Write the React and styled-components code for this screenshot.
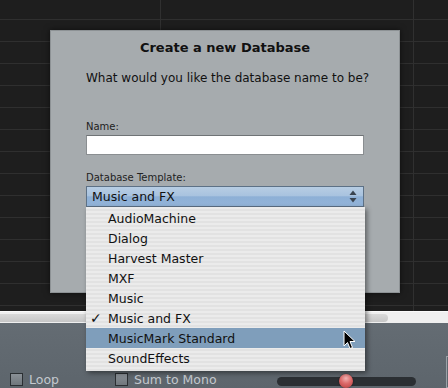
import React from 'react';
import styled, { createGlobalStyle } from 'styled-components';

const GlobalStyle = createGlobalStyle`
  html, body { margin: 0; padding: 0; background: #1e1e1e; }
  body { font-family: "DejaVu Sans", "Liberation Sans", sans-serif; }
`;

const Screen = styled.div`
  width: 448px;
  height: 388px;
  display: flex;
  flex-direction: column;
  overflow: hidden;
  position: relative;
`;

const Workspace = styled.div`
  position: relative;
  height: 311px;
  flex: none;
  background-color: #1e1e1e;
  background-image:
    linear-gradient(90deg, transparent 160px, #303030 160px, #303030 161px, transparent 161px,
      transparent 413px, #303030 413px, #303030 414px, transparent 414px),
    repeating-linear-gradient(180deg, transparent 0, transparent 19px, #2f2f2f 19px, #2f2f2f 20px, transparent 20px, transparent 22px);
`;

const Dialog = styled.div`
  position: absolute;
  left: 50px;
  top: 30px;
  width: 350px;
  height: 263px;
  box-sizing: border-box;
  background: #a6abae;
  border: 1px solid #8d9295;
  box-shadow: 0 0 6px rgba(0, 0, 0, 0.6);
  display: flex;
  flex-direction: column;
  padding: 9px 35px 0;
  color: #111;
`;

const Title = styled.div`
  font-size: 13px;
  font-weight: bold;
  text-align: center;
  line-height: 16px;
`;

const Subtitle = styled.div`
  margin-top: 15px;
  font-size: 12px;
  text-align: center;
  line-height: 15px;
  white-space: nowrap;
`;

const Label = styled.div`
  font-size: 10px;
  line-height: 12px;
  color: #222;
  margin-top: ${p => p.$gap}px;
`;

const TextField = styled.div`
  margin-top: 2px;
  height: 20px;
  box-sizing: border-box;
  background: #fff;
  border: 1px solid #8a8e91;
  border-top-color: #6f7376;
`;

const SelectWrap = styled.div`
  position: relative;
  margin-top: 2px;
`;

const SelectBox = styled.div`
  height: 21px;
  box-sizing: border-box;
  border: 1px solid #5d7186;
  background: linear-gradient(180deg, #b7cde3 0%, #a9c3df 45%, #8eb0d6 52%, #92b3d8 100%);
  display: flex;
  align-items: center;
  padding: 0 6px 0 5px;
  font-size: 12.5px;
  color: #111;
`;

const SelectValue = styled.span`
  flex: 1;
`;

const Menu = styled.div`
  position: absolute;
  top: 100%;
  left: 0;
  right: -1px;
  padding: 1px 0 3px;
  background-color: #e9e9e9;
  background-image: repeating-linear-gradient(180deg, #ebebeb 0, #ebebeb 2px, #e2e2e2 2px, #e2e2e2 4px);
  box-shadow: 2px 2px 5px rgba(0, 0, 0, 0.45);
  z-index: 2;
`;

const MenuItem = styled.div`
  position: relative;
  height: 20px;
  display: flex;
  align-items: center;
  padding-left: 22px;
  font-size: 12.5px;
  color: #111;
  background: ${p => (p.$active ? '#7f9ebb' : 'transparent')};
`;

const Check = styled.span`
  position: absolute;
  left: 4px;
  font-size: 14px;
`;

const Cursor = styled.svg`
  position: absolute;
  left: 343px;
  top: 330px;
  z-index: 5;
`;

const Scrollbar = styled.div`
  height: 12px;
  flex: none;
  box-sizing: border-box;
  border-top: 1px solid #fafafa;
  background: #efefef;
  display: flex;
  align-items: center;
`;

const Thumb = styled.div`
  width: 388px;
  height: 8px;
  border-radius: 0 4px 4px 0;
  background: linear-gradient(180deg, #d9d9d9, #c6c6c6);
`;

const Panel = styled.div`
  flex: 1;
  background: linear-gradient(180deg, #646c73 0%, #5d656c 100%);
  display: flex;
  align-items: flex-end;
  padding: 0 0 1px 10px;
  position: relative;
`;

const CheckOption = styled.label`
  display: flex;
  align-items: center;
  gap: 6px;
  width: ${p => p.$w}px;
  font-size: 12.5px;
  color: #c4c9ce;
`;

const Box = styled.span`
  width: 11px;
  height: 11px;
  border: 1px solid #2b2f33;
  background: linear-gradient(180deg, #8a9096, #70777d);
`;

const SliderTrack = styled.div`
  position: relative;
  margin-left: 57px;
  margin-bottom: 1px;
  width: 139px;
  height: 9px;
  border-radius: 5px;
  background: #2b2f33;
`;

const Knob = styled.span`
  position: absolute;
  left: 62px;
  top: -3px;
  width: 14px;
  height: 14px;
  border-radius: 50%;
  background: radial-gradient(circle at 50% 30%, #f3b3b3 0%, #dc6a6a 45%, #b53c3c 100%);
  box-shadow: 0 0 2px rgba(0,0,0,0.6);
`;

const EdgeBox = styled.div`
  position: absolute;
  right: -8px;
  bottom: 0;
  width: 8px;
  height: 30px;
  border: 1px solid #9aa1a7;
`;

const templates = [
  'AudioMachine',
  'Dialog',
  'Harvest Master',
  'MXF',
  'Music',
  'Music and FX',
  'MusicMark Standard',
  'SoundEffects',
];

function UpDown() {
  return (
    <svg width="8" height="13" viewBox="0 0 8 13">
      <path d="M4 0.5 L7.5 5 L0.5 5 Z" fill="#3a4450" />
      <path d="M4 12.5 L7.5 8 L0.5 8 Z" fill="#3a4450" />
    </svg>
  );
}

export default function App() {
  return (
    <Screen>
      <GlobalStyle />
      <Workspace>
        <Dialog>
          <Title>Create a new Database</Title>
          <Subtitle>What would you like the database name to be?</Subtitle>
          <Label $gap={35}>Name:</Label>
          <TextField />
          <Label $gap={17}>Database Template:</Label>
          <SelectWrap>
            <SelectBox>
              <SelectValue>Music and FX</SelectValue>
              <UpDown />
            </SelectBox>
            <Menu>
              {templates.map(t => (
                <MenuItem key={t} $active={t === 'MusicMark Standard'}>
                  {t === 'Music and FX' && <Check>✓</Check>}
                  {t}
                </MenuItem>
              ))}
            </Menu>
          </SelectWrap>
        </Dialog>
      </Workspace>
      <Scrollbar>
        <Thumb />
      </Scrollbar>
      <Panel>
        <CheckOption $w={105}><Box />Loop</CheckOption>
        <CheckOption $w={105}><Box />Sum to Mono</CheckOption>
        <SliderTrack>
          <Knob />
        </SliderTrack>
        <EdgeBox />
      </Panel>
      <Cursor width="14" height="20" viewBox="0 0 14 20">
        <path d="M1 1 L1 16 L4.5 12.5 L7 18.5 L9.5 17.5 L7 11.5 L12 11.5 Z" fill="#000" stroke="#fff" strokeWidth="1" />
      </Cursor>
    </Screen>
  );
}
